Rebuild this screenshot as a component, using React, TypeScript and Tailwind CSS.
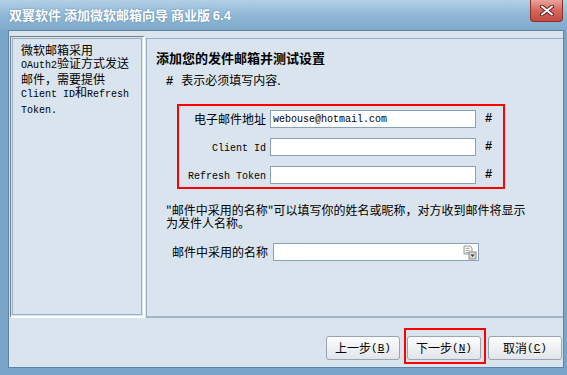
const cjk = '"Noto Sans CJK SC", "Liberation Sans", sans-serif';

function Mono({ children }: { children: React.ReactNode }) {
  return <span className="font-['Liberation_Mono',monospace] text-[10px]">{children}</span>;
}

function WinButton({ label, hotkey }: { label: string; hotkey: string }) {
  return (
    <button
      type="button"
      className="h-[24px] w-[74px] rounded-[3px] border border-[#9aa5b1] bg-gradient-to-b from-[#fdfdfd] to-[#e1e5ea] text-[12px] leading-none text-black flex items-center justify-center"
    >
      {label}
      <span className="font-['Liberation_Mono',monospace] text-[11px]">
        (<span className="underline">{hotkey}</span>)
      </span>
    </button>
  );
}

function FieldRow({ label, value, mono }: { label: string; value?: string; mono?: boolean }) {
  return (
    <div className="flex items-center h-[18px]">
      <div className="w-[87px] text-right text-[12px] leading-none text-black">
        {mono ? <Mono>{label}</Mono> : label}
      </div>
      <div className="ml-[4px] w-[206px] h-[18px] border border-[#8aa0b4] bg-white flex items-center px-[2px]">
        {value && <span className="font-['Liberation_Mono',monospace] text-[10px] text-black">{value}</span>}
      </div>
      <div className="ml-[9px] text-[12px] font-bold font-['Liberation_Mono',monospace] text-black">#</div>
    </div>
  );
}

function DocIcon() {
  return (
    <svg width="14" height="15" viewBox="0 0 14 15">
      <path d="M1 1h6l2 2v6H1z" fill="#f4f4f4" stroke="#9a9a9a" />
      <path d="M2.5 3.5h4M2.5 5.5h4M2.5 7.5h3" stroke="#b0b0b0" />
      <rect x="6" y="7" width="7" height="7" fill="#d8d8d8" stroke="#8a8a8a" />
      <path d="M7.5 9.5h4l-2 2.5z" fill="#333" />
    </svg>
  );
}

export default function App() {
  return (
    <div className="w-[567px] h-[375px] bg-[#7ba5c8] flex flex-col overflow-hidden" style={{ fontFamily: cjk }}>
      {/* title bar */}
      <div className="h-[30px] flex items-start justify-between bg-gradient-to-b from-[#b3d0e6] via-[#90b8d6] to-[#80aacc]">
        <div className="pl-[9px] pt-[7px] text-[13px] font-bold text-white leading-[16px] [text-shadow:0_0_2px_#5b82a6]">
          双翼软件 添加微软邮箱向导 商业版 <span className="font-['Liberation_Sans',sans-serif]">6.4</span>
        </div>
        <div className="mr-[4px] w-[33px] h-[22px] rounded-b-[4px] border border-t-0 border-[#8a302c] bg-gradient-to-b from-[#e9a39c] via-[#d5665d] to-[#c64a40] flex items-center justify-center">
          <svg width="14" height="11" viewBox="0 0 14 11">
            <path d="M2 1.5l10 8M12 1.5l-10 8" stroke="#6b2420" strokeWidth="4" strokeLinecap="round" />
            <path d="M2 1.5l10 8M12 1.5l-10 8" stroke="#ffffff" strokeWidth="2" strokeLinecap="round" />
          </svg>
        </div>
      </div>

      {/* body */}
      <div className="flex-1 ml-[8px] mr-[3px] mb-[7px] border border-[#5a84a8] bg-[#d9e4ee] flex flex-col">
        <div className="flex mt-[5px] h-[282px]">
          {/* left panel */}
          <div className="ml-[1px] w-[135px] border-t border-l border-[#7c7c7c] border-r-2 border-b-2 border-r-white border-b-white p-[1px]">
            <div className="h-full border border-[#8fb1ce] pl-[8px] pt-[4px] text-[12px] leading-[13px] text-black">
              <div>微软邮箱采用</div>
              <div>
                <Mono>OAuth2</Mono>验证方式发送
              </div>
              <div>邮件，需要提供</div>
              <div>
                <Mono>Client ID</Mono>和<Mono>Refresh</Mono>
              </div>
              <div>
                <Mono>Token.</Mono>
              </div>
            </div>
          </div>

          {/* right panel */}
          <div className="ml-[1px] mt-[2px] flex-1 border-t border-l border-[#93b1cb] border-b-2 border-b-[#a2b5c6] pt-[11px]">
            <div className="pl-[9px] text-[13px] font-bold leading-[16px] text-black">添加您的发件邮箱并测试设置</div>
            <div className="pl-[19px] mt-[6px] text-[12px] leading-[16px] text-black">
              <span className="font-bold font-['Liberation_Mono',monospace] mr-[8px]">#</span>表示必须填写内容.
            </div>

            <div className="ml-[30px] mt-[14px] w-[328px] border-2 border-[#ff0000] pt-[4px] pb-[3px] flex flex-col gap-[10px]">
              <FieldRow label="电子邮件地址" value="webouse@hotmail.com" />
              <FieldRow label="Client Id" mono />
              <FieldRow label="Refresh Token" mono />
            </div>

            <div className="ml-[19px] mt-[14px] text-[12px] leading-[13px] text-black">
              <div>"邮件中采用的名称"可以填写你的姓名或昵称，对方收到邮件将显示</div>
              <div>为发件人名称。</div>
            </div>

            <div className="ml-[25px] mt-[14px] flex items-center h-[18px]">
              <div className="text-[12px] leading-none text-black">邮件中采用的名称</div>
              <div className="ml-[5px] w-[206px] h-[18px] border border-[#8aa0b4] bg-white flex items-center justify-end pr-[1px]">
                <DocIcon />
              </div>
            </div>
          </div>
        </div>

        {/* buttons */}
        <div className="flex justify-end gap-[7px] pt-[18px] pr-[1px]">
          <WinButton label="上一步" hotkey="B" />
          <div className="relative">
            <WinButton label="下一步" hotkey="N" />
            <div className="absolute -left-[3px] -right-[5px] -top-[8px] -bottom-[4px] border-2 border-[#ff0000] pointer-events-none" />
          </div>
          <WinButton label="取消" hotkey="C" />
        </div>
      </div>
    </div>
  );
}
